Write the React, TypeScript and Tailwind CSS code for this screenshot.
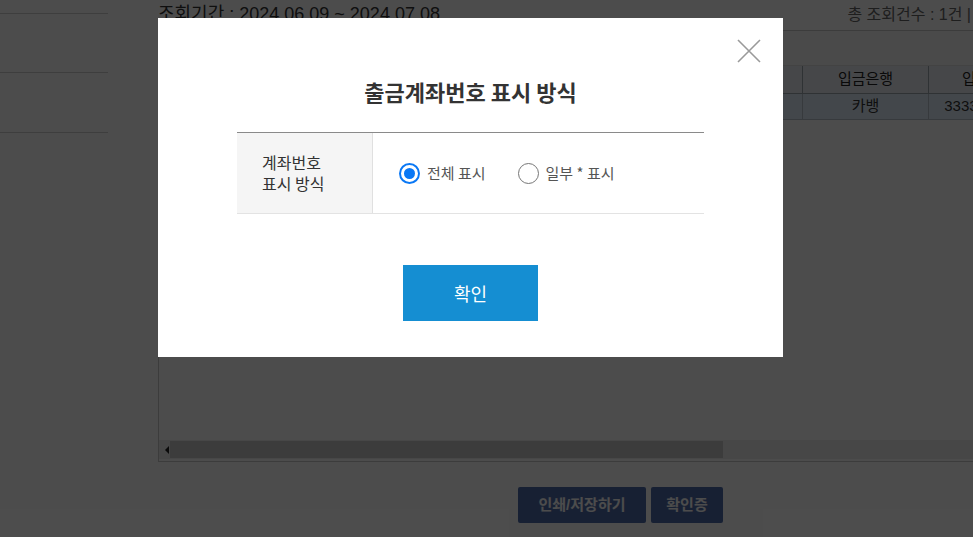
import React from 'react';

const headCols = [
  { label: '거래일시', w: 'w-[120px]' },
  { label: '출금계좌번호', w: 'w-[150px]' },
  { label: '받는분', w: 'w-[110px]' },
  { label: '이체금액', w: 'w-[120px]' },
  { label: '메모', w: 'w-[144px]' },
  { label: '입금은행', w: 'w-[126px]' },
  { label: '입금계좌번호', w: 'w-[150px]' },
];

const rowCells = ['2024.07.08 14:21', '1002-***-123456', '홍길동', '10,000', '생활비 이체 메...', '카뱅', '3333-01-2345678'];

function RadioOption({ checked, label }: { checked: boolean; label: string }) {
  return (
    <label className="flex items-center gap-[7px] cursor-pointer">
      {checked ? (
        <span className="w-[21px] h-[21px] rounded-full border-2 border-[#0a78f5] flex items-center justify-center bg-white">
          <span className="w-[11px] h-[11px] rounded-full bg-[#0a78f5]" />
        </span>
      ) : (
        <span className="w-[21px] h-[21px] rounded-full border-[1.5px] border-[#767676] bg-white" />
      )}
      <span className="text-[15px] text-[#555]">{label}</span>
    </label>
  );
}

export default function App() {
  return (
    <div className="relative w-[973px] h-[537px] overflow-hidden bg-white font-['Liberation_Sans','Noto_Sans_CJK_KR',sans-serif]">
      {/* page behind the dialog */}
      <div className="flex h-full">
        <aside className="w-[108px] shrink-0 pt-[13px]">
          <div className="h-[59px] border-t border-[#cfcfcf]" />
          <div className="h-[60px] border-t border-[#cfcfcf]" />
          <div className="border-t border-[#cfcfcf]" />
        </aside>

        <main className="ml-[50px] flex-1 min-w-0">
          <div className="flex items-start justify-between h-[30px]">
            <h1 className="text-[18px] leading-[22px] pt-[3px] text-[#333]">조회기간 : 2024.06.09 ~ 2024.07.08</h1>
            <span className="text-[16px] leading-[18px] pt-[6px] pr-[2px] text-[#666] whitespace-nowrap">총 조회건수 : 1건 |</span>
          </div>

          <div className="w-[830px] h-[432px] border-t border-l border-b border-[#c8c8c8] bg-white flex flex-col">
            <div className="h-[35px] bg-[#f7f7f7] border-b border-[#e2e2e2]" />
            <div className="flex h-[28px] bg-[#eceff3] border-b border-[#9ea7b0] text-[15px] text-[#222]">
              {headCols.map((c) => (
                <div key={c.label} className={`${c.w} shrink-0 border-r border-[#9ea7b0] flex items-center justify-center`}>
                  {c.label}
                </div>
              ))}
            </div>
            <div className="flex h-[26px] bg-[#e1effc] border-b border-[#b7c2cc] text-[15px] text-[#333]">
              {rowCells.map((t, i) => (
                <div key={i} className={`${headCols[i].w} shrink-0 border-r border-[#b7c2cc] flex items-center justify-center overflow-hidden whitespace-nowrap px-1`}>
                  {t}
                </div>
              ))}
            </div>
            <div className="flex-1" />
            <div className="h-[19px] mb-[2px] bg-[#efefef] flex items-center">
              <span className="ml-[6px] w-0 h-0 border-y-[4px] border-y-transparent border-r-[4px] border-r-[#222]" />
              <div className="ml-[1px] w-[553px] h-[17px] bg-[#c8c8c8]" />
            </div>
          </div>

          <div className="flex gap-[5px] mt-[25px] ml-[360px]">
            <button className="h-[36px] w-[128px] rounded-[2px] bg-[#4f6cab] text-white text-[15px] font-bold">인쇄/저장하기</button>
            <button className="h-[36px] w-[72px] rounded-[2px] bg-[#4f6cab] text-white text-[15px] font-bold">확인증</button>
          </div>
        </main>
      </div>

      {/* dim overlay */}
      <div className="absolute inset-0 bg-black/70" />

      {/* dialog */}
      <div className="absolute left-[158px] top-[18px] w-[625px] h-[339px] bg-white font-['Noto_Sans_CJK_KR','Noto_Sans',sans-serif] flex flex-col items-center pt-[58px]">
        <button className="absolute right-[22px] top-[21px] w-[24px] h-[24px]" aria-label="닫기">
          <svg viewBox="0 0 24 24" className="w-[24px] h-[24px]">
            <path d="M1 1 L23 23 M23 1 L1 23" stroke="#9a9a9a" strokeWidth="1.6" fill="none" />
          </svg>
        </button>

        <h2 className="text-[22px] leading-[30px] font-bold text-[#333]">출금계좌번호 표시 방식</h2>

        <div className="mt-[26px] w-[467px] flex border-t border-[#8a8a8a] border-b border-b-[#e3e3e3] h-[82px]">
          <div className="w-[136px] shrink-0 bg-[#f5f5f5] border-r border-[#e0e0e0] pl-[25px] flex items-center text-[16px] leading-[21px] text-[#333]">
            계좌번호
            <br />
            표시 방식
          </div>
          <div className="flex items-center pl-[26px] gap-[32px]">
            <RadioOption checked label="전체 표시" />
            <RadioOption checked={false} label="일부 * 표시" />
          </div>
        </div>

        <button className="mt-[51px] w-[135px] h-[56px] bg-[#158ed2] text-white text-[18px]">확인</button>
      </div>
    </div>
  );
}
